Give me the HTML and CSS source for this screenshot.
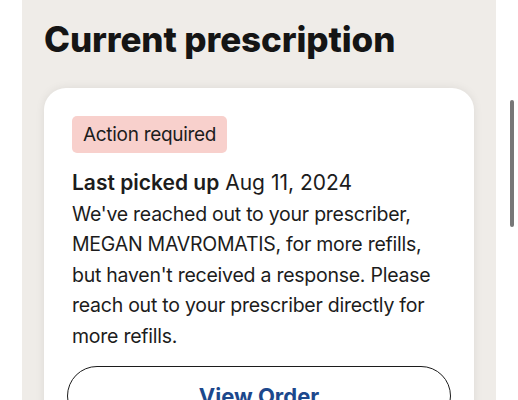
FILE: index.html
```html
<!DOCTYPE html>
<html>
<head>
	<meta charset="utf-8">
	<meta name="viewport" content="width=device-width, initial-scale=1">
	<title>Current prescription</title>

	<link rel="stylesheet" href="styles.css">
</head>
<body>

	<div class="page">
		<section class="panel">
			<h2 class="title">Current prescription</h2>

			<div class="card">
				<div class="badge">Action required</div>
				<p class="picked"><b>Last picked up</b> Aug 11, 2024</p>
				<p class="message">We've reached out to your prescriber, MEGAN MAVROMATIS, for more refills, but haven't received a response. Please reach out to your prescriber directly for more refills.</p>
				<div class="button">View Order</div>
			</div>
		</section>

		<div class="scrollbar"></div>
	</div>

</body>
</html>
```

FILE: styles.css
```css
* {
	margin: 0;
	padding: 0;
	box-sizing: border-box;
}

html {
	font-family: Inter, "Liberation Sans", sans-serif;
	color: #1c1c1c;
}

body {
	background-color: #fff;
	height: 400px;
	overflow: hidden;
}

.page {
	display: flex;
	align-items: flex-start;
	height: 400px;
	padding-left: 22px;
}

.panel {
	width: 474px;
	height: 400px;
	background-color: rgb(239, 236, 232);
	padding: 21px 22px 0;
}

.title {
	font-size: 35px;
	font-weight: 800;
	letter-spacing: -0.1px;
	line-height: 36px;
	margin-bottom: 31px;
	color: #151515;
}

.card {
	background-color: #fff;
	border-radius: 22px;
	padding: 28px 28px 40px;
	box-shadow: 0 0 10px rgba(0, 0, 0, .08);
}

.badge {
	display: inline-block;
	background-color: rgb(248, 208, 204);
	border-radius: 5px;
	font-size: 19px;
	letter-spacing: -0.3px;
	line-height: 37px;
	padding: 0 11px;
}

.picked {
	font-size: 21px;
	line-height: 30px;
	margin-top: 15px;
}

.picked b {
	font-weight: 600;
}

.message {
	font-size: 19.5px;
	letter-spacing: -0.25px;
	line-height: 30.4px;
	margin-top: 1px;
}

.button {
	margin: 15px -5px 0;
	height: 60px;
	border: 1.5px solid #1c1c1c;
	border-radius: 30px;
	display: flex;
	align-items: center;
	justify-content: center;
	font-size: 22px;
	font-weight: 700;
	color: rgb(28, 72, 140);
}

.scrollbar {
	width: 4px;
	height: 127px;
	margin: 100px 0 0 14px;
	border-radius: 2px;
	background-color: #777;
}
```
